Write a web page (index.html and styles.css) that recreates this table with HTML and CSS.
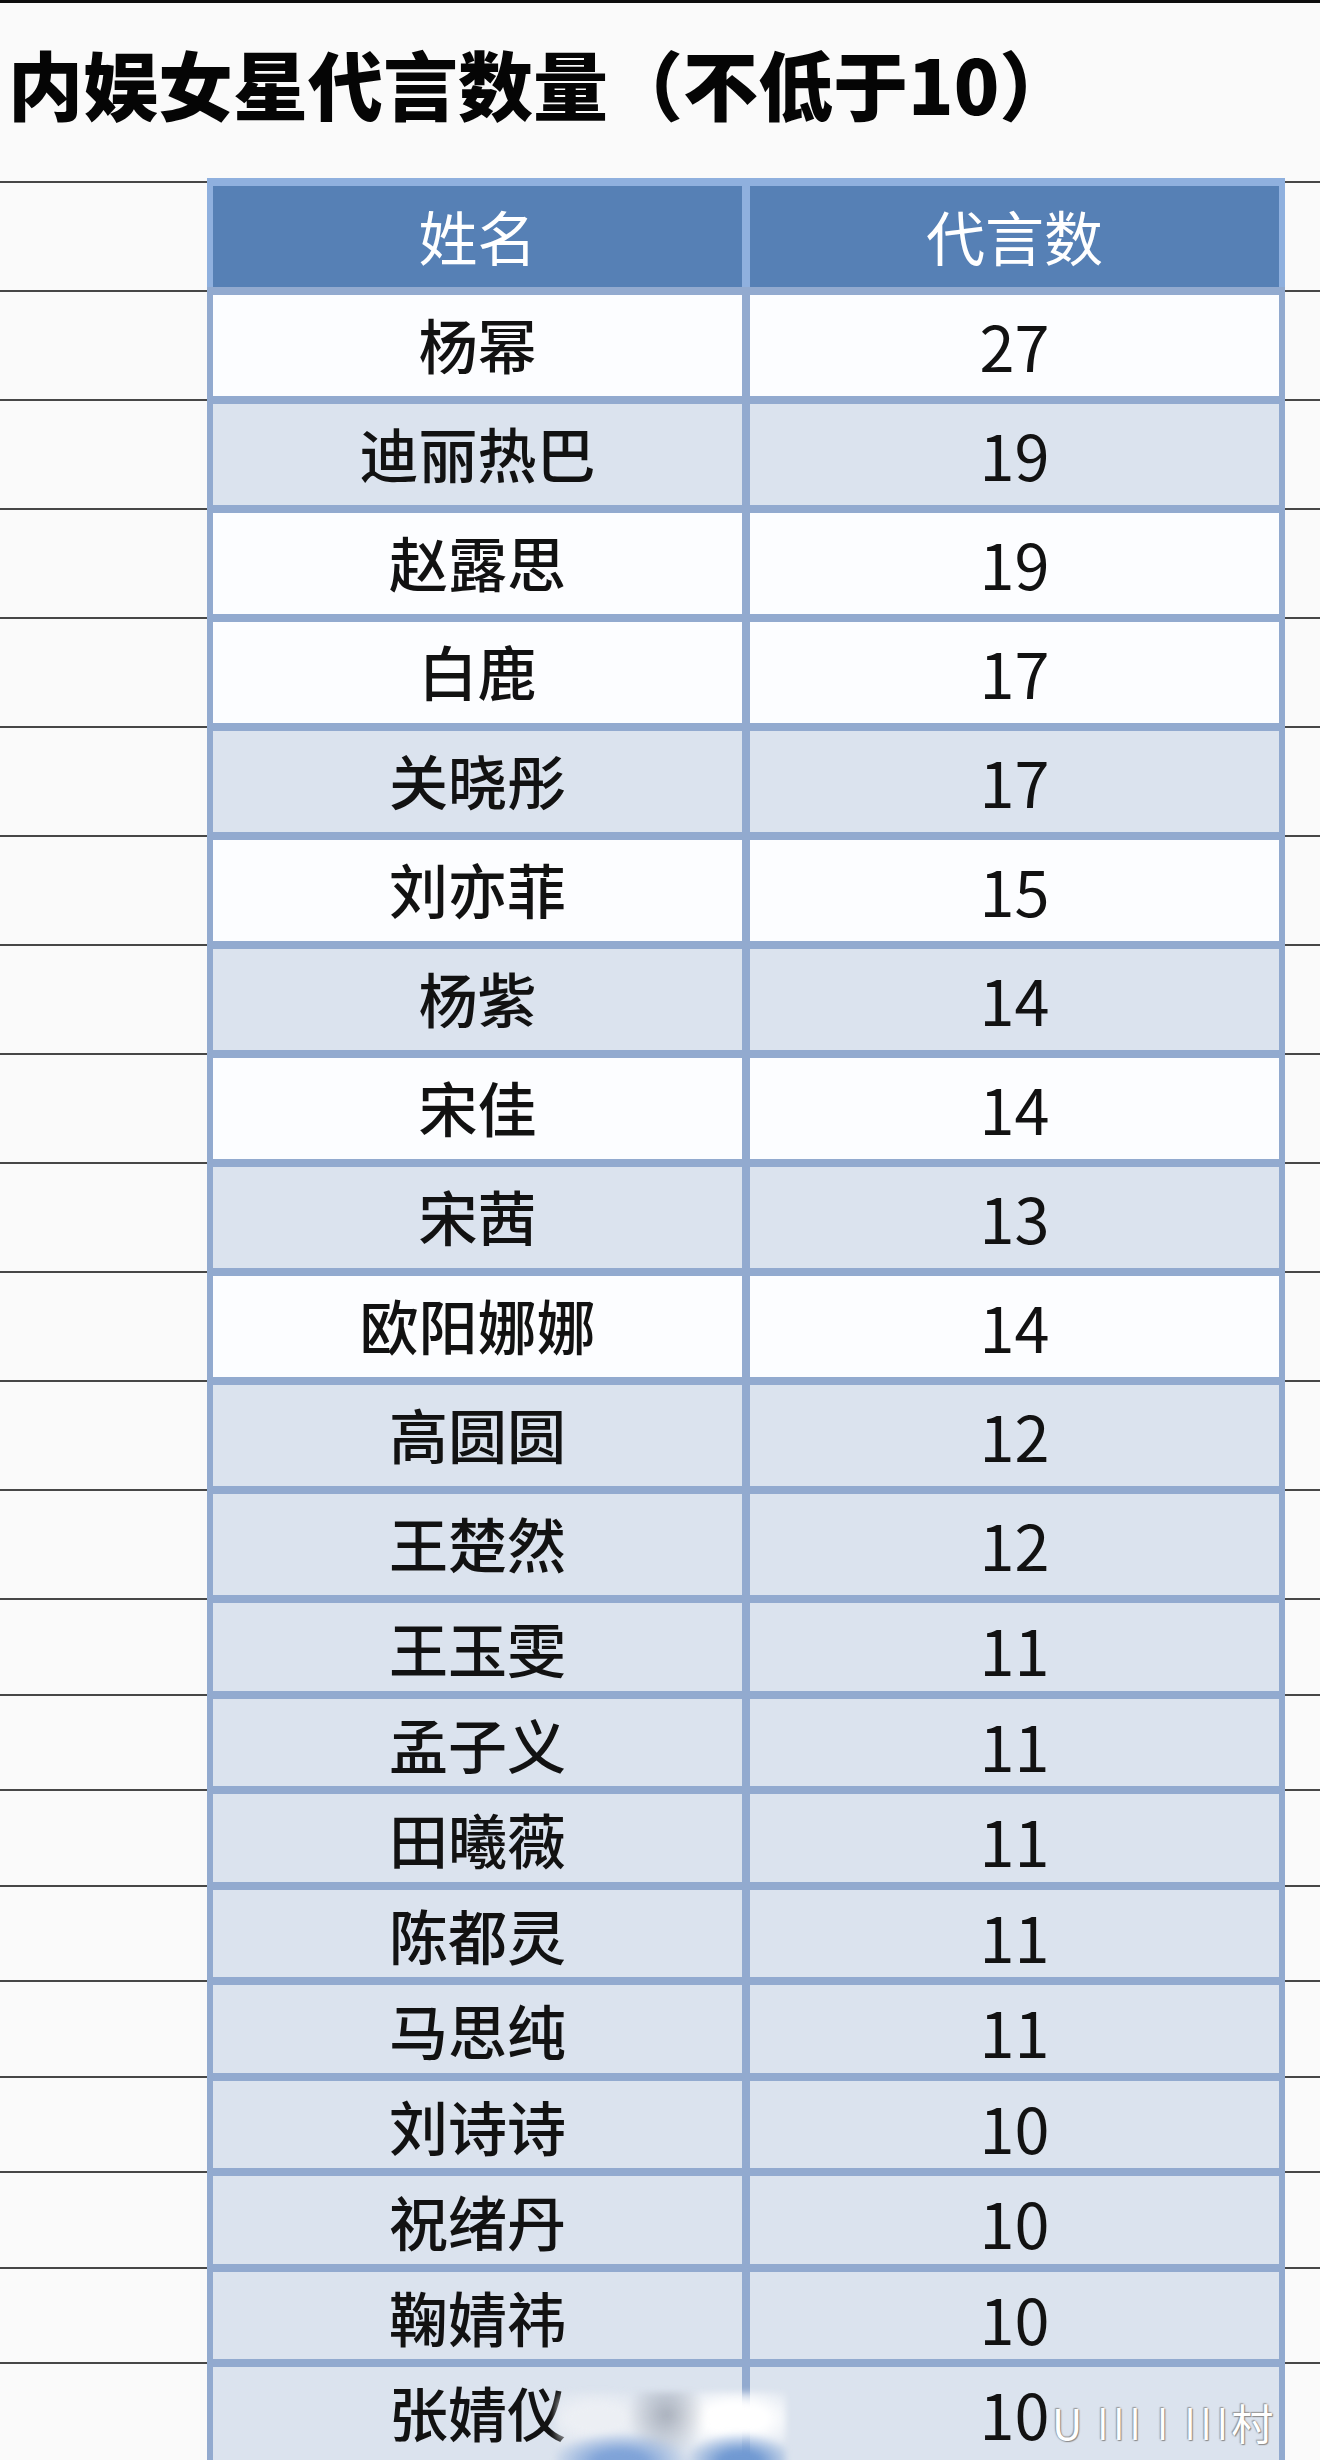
FILE: index.html
```html
<!DOCTYPE html>
<html lang="zh-CN">
<head>
<meta charset="utf-8">
<title>内娱女星代言数量（不低于10）</title>
<link rel="stylesheet" href="styles.css">
</head>
<body>
<div class="page">
  <div class="topbar"></div>
  <h1 class="title">内娱女星代言数量（不低于10）</h1>
  <div class="sheet">
    <div class="row head"><div class="side"></div><div class="tbl"><div class="cell">姓名</div><div class="cell">代言数</div></div><div class="side"></div></div>
    <div class="row w"><div class="side"></div><div class="tbl"><div class="cell">杨幂</div><div class="cell num">27</div></div><div class="side"></div></div>
    <div class="row l"><div class="side"></div><div class="tbl"><div class="cell">迪丽热巴</div><div class="cell num">19</div></div><div class="side"></div></div>
    <div class="row w"><div class="side"></div><div class="tbl"><div class="cell">赵露思</div><div class="cell num">19</div></div><div class="side"></div></div>
    <div class="row w"><div class="side"></div><div class="tbl"><div class="cell">白鹿</div><div class="cell num">17</div></div><div class="side"></div></div>
    <div class="row l"><div class="side"></div><div class="tbl"><div class="cell">关晓彤</div><div class="cell num">17</div></div><div class="side"></div></div>
    <div class="row w"><div class="side"></div><div class="tbl"><div class="cell">刘亦菲</div><div class="cell num">15</div></div><div class="side"></div></div>
    <div class="row l"><div class="side"></div><div class="tbl"><div class="cell">杨紫</div><div class="cell num">14</div></div><div class="side"></div></div>
    <div class="row w"><div class="side"></div><div class="tbl"><div class="cell">宋佳</div><div class="cell num">14</div></div><div class="side"></div></div>
    <div class="row l"><div class="side"></div><div class="tbl"><div class="cell">宋茜</div><div class="cell num">13</div></div><div class="side"></div></div>
    <div class="row w"><div class="side"></div><div class="tbl"><div class="cell">欧阳娜娜</div><div class="cell num">14</div></div><div class="side"></div></div>
    <div class="row l"><div class="side"></div><div class="tbl"><div class="cell">高圆圆</div><div class="cell num">12</div></div><div class="side"></div></div>
    <div class="row l"><div class="side"></div><div class="tbl"><div class="cell">王楚然</div><div class="cell num">12</div></div><div class="side"></div></div>
    <div class="row l short"><div class="side"></div><div class="tbl"><div class="cell">王玉雯</div><div class="cell num">11</div></div><div class="side"></div></div>
    <div class="row l short"><div class="side"></div><div class="tbl"><div class="cell">孟子义</div><div class="cell num">11</div></div><div class="side"></div></div>
    <div class="row l short"><div class="side"></div><div class="tbl"><div class="cell">田曦薇</div><div class="cell num">11</div></div><div class="side"></div></div>
    <div class="row l short"><div class="side"></div><div class="tbl"><div class="cell">陈都灵</div><div class="cell num">11</div></div><div class="side"></div></div>
    <div class="row l short"><div class="side"></div><div class="tbl"><div class="cell">马思纯</div><div class="cell num">11</div></div><div class="side"></div></div>
    <div class="row l short"><div class="side"></div><div class="tbl"><div class="cell">刘诗诗</div><div class="cell num">10</div></div><div class="side"></div></div>
    <div class="row l short"><div class="side"></div><div class="tbl"><div class="cell">祝绪丹</div><div class="cell num">10</div></div><div class="side"></div></div>
    <div class="row l short"><div class="side"></div><div class="tbl"><div class="cell">鞠婧祎</div><div class="cell num">10</div></div><div class="side"></div></div>
    <div class="row l short last"><div class="side"></div><div class="tbl"><div class="cell">张婧仪</div><div class="cell num">10</div></div><div class="side"></div></div>
  </div>
  <div class="blob"></div>
  <div class="watermark">U ǀǀǀ ǀ ǀǀǀ村</div>
</div>
</body>
</html>
```

FILE: styles.css
```css
html, body {
  margin: 0;
  padding: 0;
  height: 2460px;
  overflow: hidden;
  background: #fafafa;
}

.page {
  position: relative;
  width: 1320px;
  height: 2460px;
  overflow: hidden;
  font-family: "Noto Sans CJK SC", "Noto Sans", sans-serif;
}

.topbar {
  height: 3px;
  background: #0d0d0d;
}

.title {
  margin: 0;
  padding: 42px 0 58px 8px;
  font-size: 75px;
  line-height: 75px;
  font-weight: 900;
  color: #050505;
  white-space: nowrap;
}

.sheet {
  display: flex;
  flex-direction: column;
}

.row {
  display: grid;
  grid-template-columns: 207px 1078px 1fr;
  height: 109px;
  box-sizing: border-box;
}

.row.short {
  height: 95.5px;
}

.row.last {
  height: 103.5px;
}

.side {
  background: linear-gradient(#474747, #474747) 0 3px / 100% 2px no-repeat;
}

.tbl {
  display: grid;
  grid-template-columns: 529px 529px;
  column-gap: 8px;
  padding: 8px 6px 0;
  background: #92aacf;
}

.last .tbl {
  padding-bottom: 8px;
}

.cell {
  display: flex;
  align-items: center;
  justify-content: center;
  font-size: 59px;
  font-weight: 500;
  color: #121212;
  padding-bottom: 4px;
  box-sizing: border-box;
}

.num {
  font-size: 63px;
  font-weight: 400;
  padding-bottom: 2px;
}

.w .cell {
  background: #fcfdff;
}

.l .cell {
  background: #dbe3ee;
}

.head .tbl {
  background: #8fb0de;
}

.head .cell {
  background: #5680b5;
  color: #ffffff;
  font-size: 59px;
  font-weight: 400;
  padding-bottom: 2px;
}

.blob {
  position: absolute;
  left: 556px;
  top: 2392px;
  width: 230px;
  height: 76px;
  background:
    radial-gradient(ellipse 70px 30px at 28% 92%, #7fa3d8 0%, #7fa3d8 35%, rgba(127,163,216,0) 100%),
    radial-gradient(ellipse 55px 30px at 80% 92%, #7099d2 0%, #7099d2 35%, rgba(112,153,210,0) 100%),
    radial-gradient(ellipse 40px 40px at 48% 30%, #a9b0bc 0%, rgba(169,176,188,0) 100%),
    radial-gradient(ellipse 80px 38px at 78% 35%, #ffffff 0%, #ffffff 40%, rgba(255,255,255,0) 100%),
    radial-gradient(ellipse 70px 34px at 18% 35%, #eceff4 0%, #eceff4 40%, rgba(236,239,244,0) 100%);
  filter: blur(3px);
}

.watermark {
  position: absolute;
  left: 1052px;
  top: 2398px;
  font-size: 42px;
  line-height: 48px;
  color: #ffffff;
  letter-spacing: 2px;
  text-shadow: 0 0 2px #7d7d7d, 1px 1px 1px #8f8f8f, -1px -1px 1px #a5a5a5;
  white-space: nowrap;
}
```
